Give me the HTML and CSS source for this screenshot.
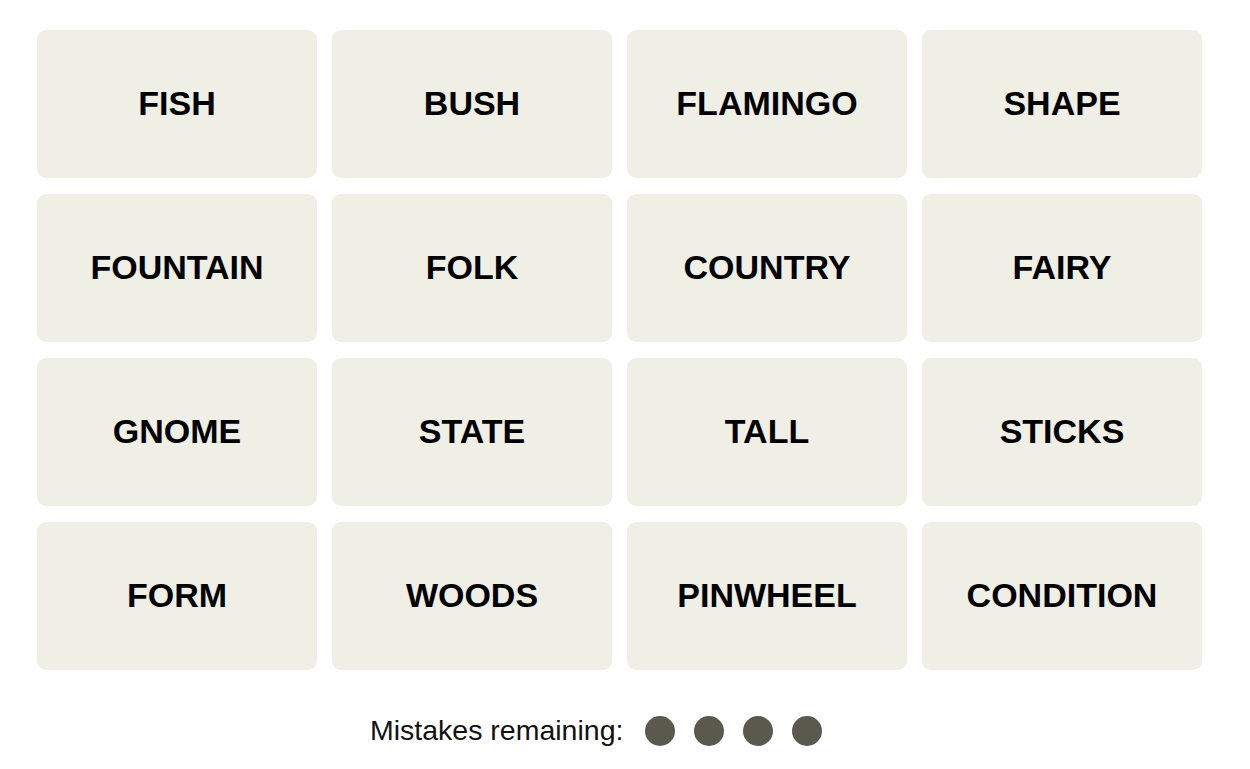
FILE: index.html
```html
<!DOCTYPE html>
<html lang="en">
<head>
    <meta charset="UTF-8">
    <meta name="viewport" content="width=device-width, initial-scale=1.0">
    <title>Connections</title>
    <link rel="stylesheet" href="styles.css">
</head>
<body>
    <main class="game">
        <div class="board">
            <button class="tile">FISH</button>
            <button class="tile">BUSH</button>
            <button class="tile">FLAMINGO</button>
            <button class="tile">SHAPE</button>

            <button class="tile">FOUNTAIN</button>
            <button class="tile">FOLK</button>
            <button class="tile">COUNTRY</button>
            <button class="tile">FAIRY</button>

            <button class="tile">GNOME</button>
            <button class="tile">STATE</button>
            <button class="tile">TALL</button>
            <button class="tile">STICKS</button>

            <button class="tile">FORM</button>
            <button class="tile">WOODS</button>
            <button class="tile">PINWHEEL</button>
            <button class="tile">CONDITION</button>
        </div>

        <div class="mistakes">
            <span class="mistakes-label">Mistakes remaining:</span>
            <span class="dots">
                <span class="dot"></span>
                <span class="dot"></span>
                <span class="dot"></span>
                <span class="dot"></span>
            </span>
        </div>
    </main>
</body>
</html>
```

FILE: styles.css
```css
/* Page */
body {
    margin: 0;
    padding: 0;
    background-color: #fff;
    font-family: "Liberation Sans", Arial, sans-serif;
    color: #121212;
}

.game {
    padding: 30px 0 0 37px;
    width: 1165px;
}

/* Word grid */
.board {
    display: grid;
    grid-template-columns: repeat(4, 280px);
    grid-auto-rows: 148px;
    column-gap: 15px;
    row-gap: 16px;
}

.tile {
    background-color: #efefe6;
    border: none;
    border-radius: 9px;
    font-family: "Liberation Sans", Arial, sans-serif;
    font-weight: bold;
    font-size: 34px;
    color: #000;
    cursor: pointer;
    padding: 0 0 2px 0;
}

/* Mistakes counter */
.mistakes {
    display: flex;
    align-items: center;
    margin-top: 46px;
    padding-left: 333px;
    height: 30px;
}

.mistakes-label {
    font-size: 28.5px;
    margin-right: 22px;
    margin-bottom: 2px;
}

.dots {
    display: flex;
    gap: 19px;
}

.dot {
    width: 30px;
    height: 30px;
    border-radius: 50%;
    background-color: #5a594e;
}
```
